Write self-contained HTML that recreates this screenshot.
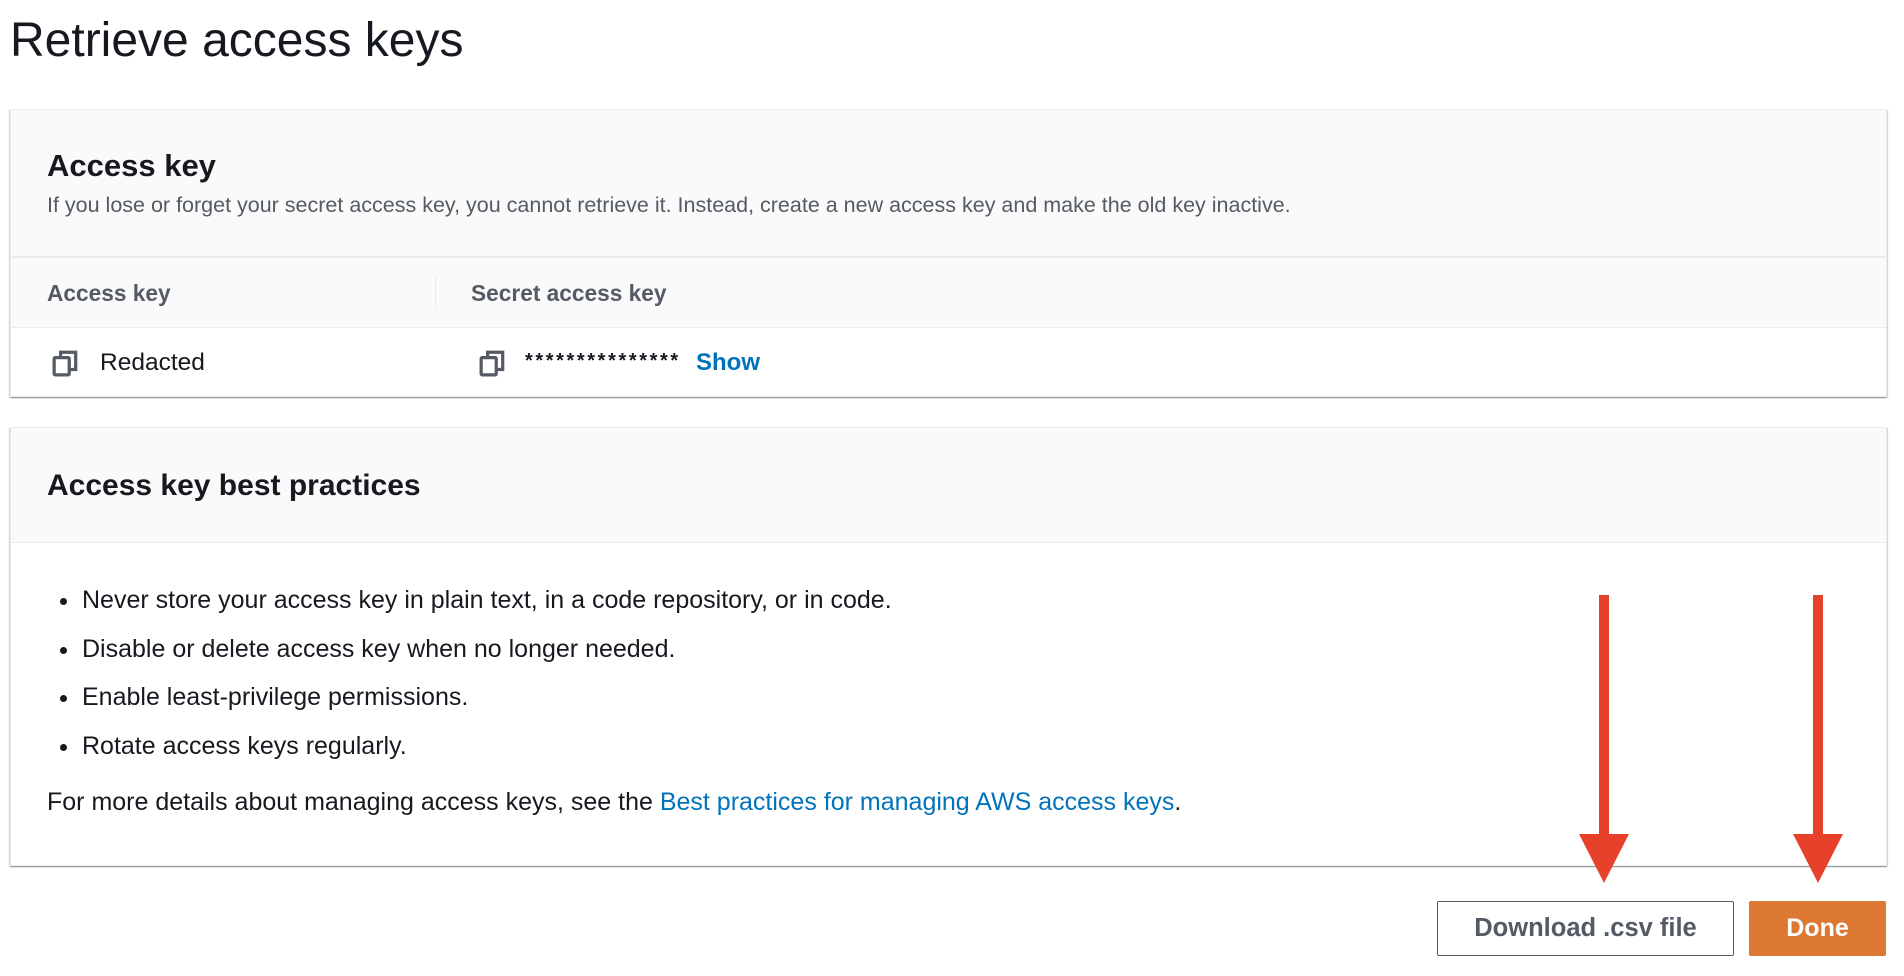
<!DOCTYPE html>
<html><head><meta charset="utf-8"><style>
*{box-sizing:border-box;margin:0;padding:0}
body{width:1904px;height:976px;background:#fff;font-family:"Liberation Sans",sans-serif;color:#16191f;position:relative;overflow:hidden}
.a{position:absolute;white-space:nowrap}
.card{position:absolute;left:10px;width:1877px;background:#fff;border:1px solid #eaeded;box-shadow:0 1px 1px 0 rgba(0,28,36,.3),1px 1px 1px 0 rgba(0,28,36,.15),-1px 1px 1px 0 rgba(0,28,36,.15)}
.hd{background:#fafafa;position:absolute;left:0;right:0;top:0;border-bottom:1px solid #eaeded}
.b{font-weight:bold}
.li{font-size:25px}
.dot{position:absolute;width:7px;height:7px;border-radius:50%;background:#16191f}
</style></head><body>
<div class="a" style="left:10px;top:11px;font-size:48px;line-height:60px">Retrieve access keys</div>

<div class="card" style="top:109px;height:288px">
  <div class="hd" style="height:147px"></div>
  <div class="a b" style="left:36px;top:37px;font-size:31px;line-height:38px">Access key</div>
  <div class="a" style="left:36px;top:83px;font-size:21.5px;color:#545b64">If you lose or forget your secret access key, you cannot retrieve it. Instead, create a new access key and make the old key inactive.</div>
  <div class="hd" style="top:147px;height:71px;border-top:1px solid #eaeded"></div>
  <div class="a" style="left:424px;top:166px;width:1px;height:34px;background:#eaeded"></div>
  <div class="a b" style="left:36px;top:170px;font-size:22.7px;color:#545b64">Access key</div>
  <div class="a b" style="left:460px;top:170px;font-size:22.7px;color:#545b64">Secret access key</div>
  <svg class="a" style="left:41px;top:239px" width="28" height="28" viewBox="0 0 26 26"><rect x="2" y="8" width="14" height="16" rx="1" fill="none" stroke="#545b64" stroke-width="3"/><path d="M8 8V3h14v16h-6" fill="none" stroke="#545b64" stroke-width="3"/></svg>
  <div class="a" style="left:89px;top:239px;font-size:24.5px">Redacted</div>
  <svg class="a" style="left:468px;top:239px" width="28" height="28" viewBox="0 0 26 26"><rect x="2" y="8" width="14" height="16" rx="1" fill="none" stroke="#545b64" stroke-width="3"/><path d="M8 8V3h14v16h-6" fill="none" stroke="#545b64" stroke-width="3"/></svg>
  <div class="a" style="left:514px;top:240px;font-size:20px;letter-spacing:2.6px;font-weight:bold">***************</div>
  <div class="a b" style="left:685px;top:239px;font-size:24px;color:#0073bb">Show</div>
</div>

<div class="card" style="top:427px;height:439px">
  <div class="hd" style="height:115px"></div>
  <div class="a b" style="left:36px;top:39px;font-size:30px;line-height:38px">Access key best practices</div>
  <div class="dot" style="left:49px;top:170px"></div>
  <div class="a li" style="left:71px;top:158px">Never store your access key in plain text, in a code repository, or in code.</div>
  <div class="dot" style="left:49px;top:219px"></div>
  <div class="a li" style="left:71px;top:207px">Disable or delete access key when no longer needed.</div>
  <div class="dot" style="left:49px;top:267px"></div>
  <div class="a li" style="left:71px;top:255px">Enable least-privilege permissions.</div>
  <div class="dot" style="left:49px;top:316px"></div>
  <div class="a li" style="left:71px;top:304px">Rotate access keys regularly.</div>
  <div class="a li" style="left:36px;top:360px">For more details about managing access keys, see the <span style="color:#0073bb">Best practices for managing AWS access keys</span>.</div>
</div>

<div class="a b" style="left:1437px;top:901px;width:297px;height:55px;border:1px solid #545b64;border-radius:2px;background:#fff;color:#545b64;font-size:25.5px;text-align:center;line-height:53px">Download .csv file</div>
<div class="a b" style="left:1749px;top:901px;width:137px;height:55px;border-radius:2px;background:#dd7832;color:#fff;font-size:25px;text-align:center;line-height:55px">Done</div>

<svg class="a" style="left:0;top:0" width="1904" height="976">
<rect x="1599" y="595" width="10" height="242" fill="#e8412b"/>
<polygon points="1579,834 1629,834 1604,883" fill="#e8412b"/>
<rect x="1813" y="595" width="10" height="242" fill="#e8412b"/>
<polygon points="1793,834 1843,834 1818,883" fill="#e8412b"/>
</svg>
</body></html>
